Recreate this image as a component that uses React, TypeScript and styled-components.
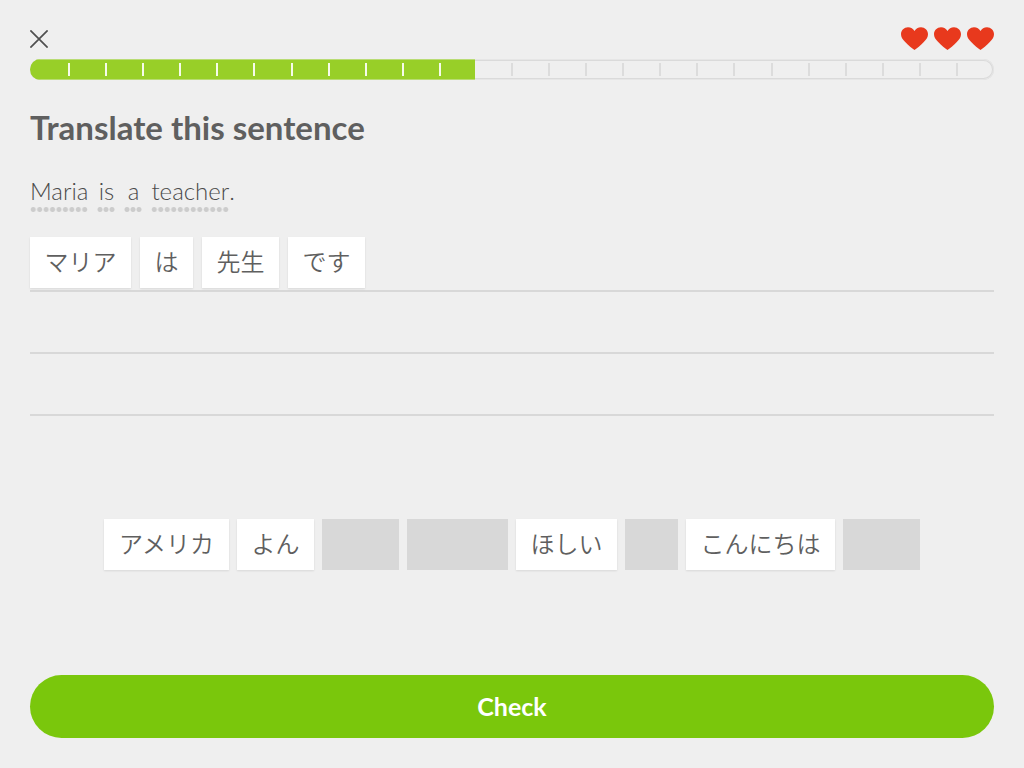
import React, { useState } from "react";
import styled, { createGlobalStyle } from "styled-components";

const GlobalStyle = createGlobalStyle`
  * { box-sizing: border-box; }
  body {
    margin: 0;
    background: #efefef;
    color: #5f5f5f;
    font-family: Lato, "Noto Sans CJK JP", sans-serif;
  }
  button { font: inherit; border: 0; padding: 0; background: none; cursor: pointer; }
`;

const CHAR = 24;
const TOTAL_STEPS = 26;
const DONE_STEPS = 12;

const Screen = styled.main`
  min-height: 100vh;
  padding: 24px 30px 30px;
  display: flex;
  flex-direction: column;
`;

const TopBar = styled.header`
  display: flex;
  justify-content: space-between;
  align-items: center;
  height: 30px;
`;

const CloseButton = styled.button`
  display: flex;
  color: #4f4f4f;
`;

const Hearts = styled.div`
  display: flex;
  gap: 6px;
  padding-bottom: 2px;
`;

const Track = styled.div`
  flex: none;
  height: 21px;
  margin-top: 5px;
  border-radius: 11px;
  overflow: hidden;
  display: grid;
  grid-template-columns: repeat(${TOTAL_STEPS}, 1fr);
  box-shadow: inset 0 0 0 1px #e6e6e6, inset 0 0 0 2px #dadada;
`;

const Step = styled.span<{ $done: boolean }>`
  display: flex;
  align-items: center;
  background: ${(p) => (p.$done ? "#98cf28" : "transparent")};
  box-shadow: ${(p) => (p.$done ? "inset 0 1px #b9dc74, inset 0 -1px #b9dc74" : "none")};
`;

const Tick = styled.span<{ $done: boolean }>`
  width: 2px;
  height: 13px;
  margin-left: ${(p) => (p.$done ? "1px" : "-1px")};
  background: ${(p) => (p.$done ? "#f6fbea" : "#dcdcdc")};
`;

const Title = styled.h1`
  margin: 27px 0 0;
  font-size: 33px;
  line-height: 40px;
  font-weight: 700;
`;

const Sentence = styled.p`
  display: flex;
  margin: 27px 0 0;
  font-size: 24px;
  line-height: 34px;
  font-weight: 300;
  color: #4a4a4a;
`;

const Hint = styled.span<{ $dots: number }>`
  min-width: 18px;
  padding-bottom: 4px;
  margin-right: 9px;
  text-align: center;
  background: radial-gradient(circle, #cccccc 2px, transparent 3px) 0 100% / calc(100% / ${(p) => p.$dots}) 5px repeat-x;

  &:last-of-type { margin-right: 0; }
`;

const AnswerLine = styled.div`
  display: flex;
  align-items: flex-start;
  gap: 9px;
  height: 62px;
  padding-top: 7px;
  border-bottom: 2px solid #d8d8d8;
`;

const Answer = styled.section`
  margin-top: 18px;
`;

const Tile = styled.button<{ $chars: number }>`
  height: 51px;
  width: ${(p) => p.$chars * CHAR + 29}px;
  font-size: ${CHAR}px;
  line-height: 48px;
  padding-bottom: 3px;
  font-family: "Noto Sans CJK JP", sans-serif;
  font-weight: 350;
  color: #5f5f5f;
  background: #ffffff;
  box-shadow: 0 1px 2px rgba(0, 0, 0, 0.1);

  &:disabled {
    background: #d8d8d8;
    box-shadow: none;
    cursor: default;
  }
`;

const Bank = styled.section`
  display: flex;
  flex-wrap: wrap;
  justify-content: center;
  gap: 8px;
  margin: 103px 0;
`;

const CheckButton = styled.button`
  width: 100%;
  height: 63px;
  margin-top: auto;
  padding-bottom: 2px;
  border-radius: 32px;
  background: #7ac70c;
  color: #ffffff;
  font-size: 25px;
  font-weight: 700;
`;

const Heart = () => (
  <svg width="27" height="23" viewBox="0 0 27 23" aria-hidden="true">
    <path
      fill="#e8391d"
      d="M13.5 23C11 21.300 7.500 18.700 4.200 15.100C1.500 12.200 0 10.200 0 7.200C0 3.300 3.200.2 7 .2C9.900.2 12.200 1.700 13.500 4C14.800 1.700 17.100.2 20 .2C23.800.2 27 3.300 27 7.200C27 10.200 25.500 12.200 22.800 15.100C19.500 18.700 16 21.300 13.500 23Z"
    />
  </svg>
);

const hints = [
  { text: "Maria", dots: 9 },
  { text: "is", dots: 3 },
  { text: "a", dots: 3 },
  { text: "teacher", dots: 12 },
];

const words = ["アメリカ", "よん", "です", "マリア", "ほしい", "は", "こんにちは", "先生"];

export default function App() {
  const [answer, setAnswer] = useState(["マリア", "は", "先生", "です"]);

  return (
    <>
      <GlobalStyle />
      <Screen>
        <TopBar>
          <CloseButton aria-label="Close">
            <svg width="18" height="18" viewBox="0 0 18 18" stroke="currentColor" strokeWidth="1.700">
              <path d="M.4.4 17.600 17.600M17.600.4.4 17.600" />
            </svg>
          </CloseButton>
          <Hearts role="img" aria-label="3 hearts">
            <Heart />
            <Heart />
            <Heart />
          </Hearts>
        </TopBar>
        <Track role="progressbar" aria-label="Lesson progress" aria-valuemin={0} aria-valuemax={TOTAL_STEPS} aria-valuenow={DONE_STEPS}>
          {Array.from({ length: TOTAL_STEPS }, (_, i) => (
            <Step key={i} $done={i < DONE_STEPS}>
              {i > 0 && i !== DONE_STEPS && <Tick $done={i < DONE_STEPS} />}
            </Step>
          ))}
        </Track>
        <Title>Translate this sentence</Title>
        <Sentence>
          {hints.map((h) => (
            <Hint key={h.text} $dots={h.dots}>{h.text}</Hint>
          ))}
          .
        </Sentence>
        <Answer>
          <AnswerLine>
            {answer.map((w) => (
              <Tile key={w} $chars={w.length} onClick={() => setAnswer(answer.filter((a) => a !== w))}>
                {w}
              </Tile>
            ))}
          </AnswerLine>
          <AnswerLine />
          <AnswerLine />
        </Answer>
        <Bank>
          {words.map((w) => {
            const used = answer.includes(w);
            return (
              <Tile key={w} $chars={w.length} disabled={used} onClick={() => setAnswer([...answer, w])}>
                {used ? null : w}
              </Tile>
            );
          })}
        </Bank>
        <CheckButton>Check</CheckButton>
      </Screen>
    </>
  );
}
